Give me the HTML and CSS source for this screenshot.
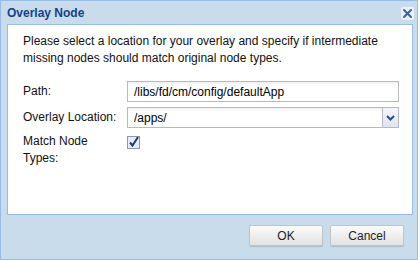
FILE: index.html
```html
<!DOCTYPE html>
<html lang="en">
<head>
    <meta charset="UTF-8">
    <title>Overlay Node</title>
    <link rel="stylesheet" href="styles.css">
</head>
<body>
    <div class="window">
        <div class="header">
            <span class="title">Overlay Node</span>
            <span class="close">
                <svg width="11" height="11" viewBox="0 0 11 11"><path d="M2 2 L9 9 M9 2 L2 9" stroke="#3d64a0" stroke-width="2" stroke-linecap="round"/></svg>
            </span>
        </div>
        <div class="panel">
            <p class="intro">Please select a location for your overlay and specify if intermediate missing nodes should match original node types.</p>
            <div class="form">
                <label class="label">Path:</label>
                <div class="field"><input class="text" type="text" value="/libs/fd/cm/config/defaultApp"></div>
                <label class="label">Overlay Location:</label>
                <div class="field combo">
                    <input class="text" type="text" value="/apps/">
                    <span class="trigger">
                        <svg width="9" height="6" viewBox="0 0 9 6"><path d="M1 1 L4.5 4.5 L8 1" fill="none" stroke="#2c4f86" stroke-width="2"/></svg>
                    </span>
                </div>
                <label class="label narrow">Match Node Types:</label>
                <div class="field">
                    <span class="check">
                        <svg width="13" height="13" viewBox="0 0 13 13"><rect x="0.5" y="0.5" width="12" height="12" fill="#e8ecf6" stroke="#8a97b8"/><path d="M3 6.5 L5.5 9.5 L11 1" fill="none" stroke="#1f3a7a" stroke-width="2"/></svg>
                    </span>
                </div>
            </div>
        </div>
        <div class="footer">
            <button class="button">OK</button>
            <button class="button">Cancel</button>
        </div>
    </div>
</body>
</html>
```

FILE: styles.css
```css
body {
    margin: 0;
    background: #ffffff;
    font-family: "Liberation Sans", Arial, sans-serif;
    font-size: 12px;
    color: #000000;
}
.window {
    width: 416px;
    height: 258px;
    border: 1px solid #99bbe8;
    background: #c8dcec;
    display: flex;
    flex-direction: column;
}
.header {
    height: 23px;
    display: flex;
    align-items: center;
    justify-content: space-between;
    padding: 0 3px 0 6px;
}
.title {
    font-weight: bold;
    color: #15428b;
    font-size: 12px;
}
.close {
    width: 13px;
    height: 13px;
    background: #e9f1fa;
    border-radius: 2px;
    display: flex;
    align-items: center;
    justify-content: center;
    margin-top: 2px;
}
.panel {
    margin: 0 4px 0 6px;
    height: 181px;
    background: #ffffff;
    border: 1px solid #99bbe8;
    padding: 8px 13px 0 15px;
}
.intro {
    margin: 0;
    line-height: 17px;
    color: #111111;
}
.form {
    margin-top: 14px;
    display: grid;
    grid-template-columns: 104px 1fr;
    row-gap: 5px;
}
.label {
    line-height: 17px;
    padding-top: 2px;
    color: #111111;
}
.narrow {
    max-width: 80px;
    padding-top: 0;
}
.field {
    display: flex;
    align-items: flex-start;
}
.text {
    flex: 1;
    height: 21px;
    box-sizing: border-box;
    border: 1px solid #b5b8c8;
    background: linear-gradient(#f1f1f1, #ffffff 4px);
    font-family: "Liberation Sans", Arial, sans-serif;
    font-size: 12px;
    padding: 0 6px;
    margin: 0;
    color: #000000;
}
.combo .text {
    border-right: none;
}
.trigger {
    width: 17px;
    height: 21px;
    box-sizing: border-box;
    border: 1px solid #b5b8c8;
    background: linear-gradient(#f4f6fa, #dfe4ee);
    display: flex;
    align-items: center;
    justify-content: center;
}
.check {
    margin-top: 3px;
    height: 13px;
}
.footer {
    flex: 1;
    display: flex;
    justify-content: flex-end;
    align-items: flex-start;
    gap: 7px;
    padding: 10px 13px 0 0;
}
.button {
    width: 74px;
    height: 21px;
    border: 1px solid #c4c4c4;
    border-radius: 2px;
    background: linear-gradient(#fbfbfb, #e2e2e2);
    font-family: "Liberation Sans", Arial, sans-serif;
    font-size: 12px;
    color: #222222;
    box-shadow: 0 1px 1px rgba(0, 0, 0, 0.15);
}
```
